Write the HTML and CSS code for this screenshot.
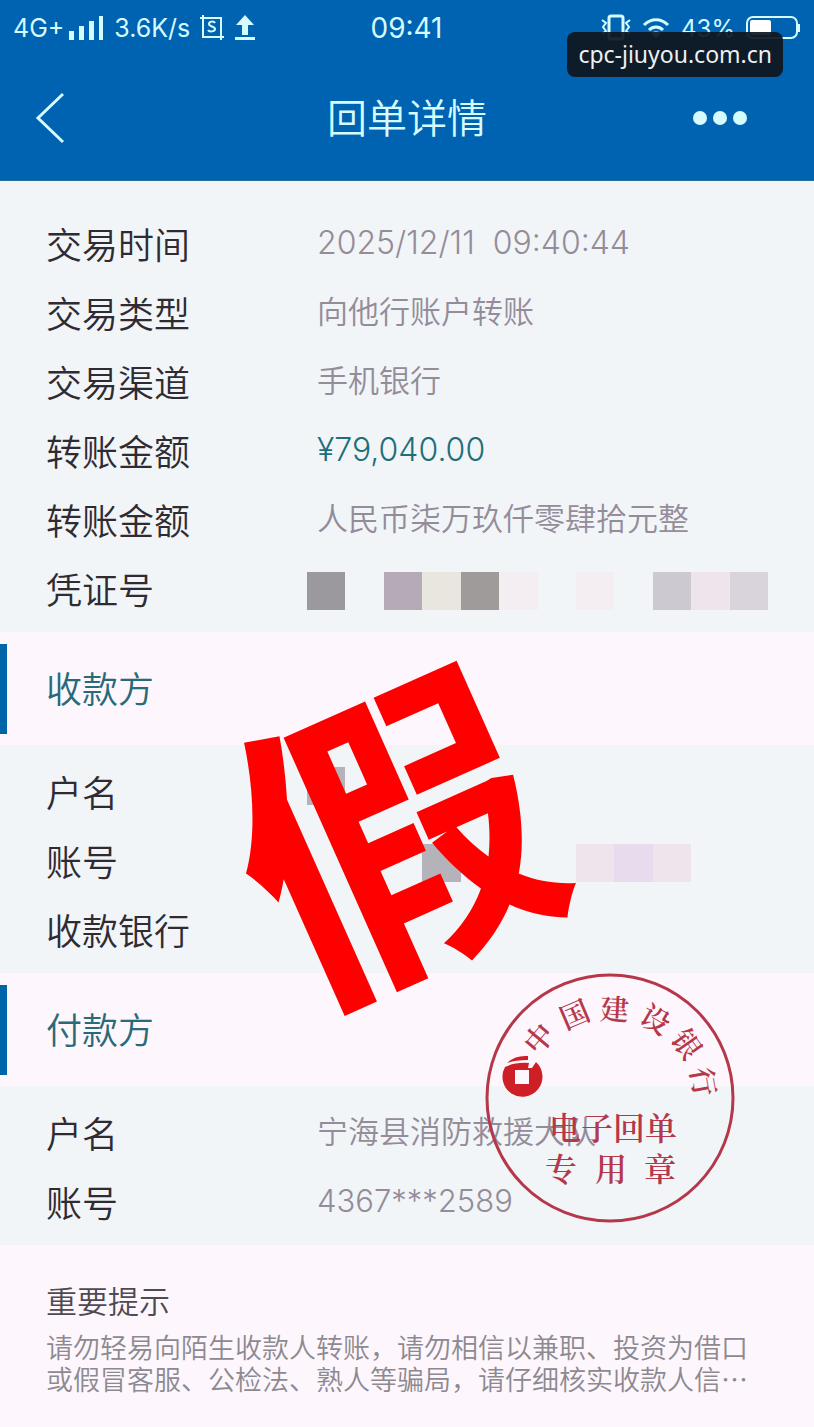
FILE: index.html
```html
<!DOCTYPE html>
<html lang="zh-CN">
<head>
    <meta charset="UTF-8">
    <meta name="viewport" content="width=device-width, initial-scale=1.0">
    <title>回单详情</title>
    <link rel="stylesheet" href="styles.css">
</head>
<body>
    <header class="header">
        <div class="status-bar">
            <div class="status-left">
                <span class="network">4G+</span>
                <svg class="signal" width="36" height="26" viewBox="0 0 36 26" fill="currentColor">
                    <rect x="1" y="16" width="5" height="9"/>
                    <rect x="11" y="11" width="5" height="14"/>
                    <rect x="21" y="6" width="5" height="19"/>
                    <rect x="31" y="1" width="4" height="24"/>
                </svg>
                <span class="speed">3.6K/s</span>
                <svg class="shot" width="24" height="26" viewBox="0 0 24 26" fill="none" stroke="currentColor" stroke-width="2">
                    <path d="M0 3h21v22M3 0v22h21"/>
                    <path d="M15 8c-1-2-6-2-6 1s6 2 6 5-6 3-7 1"/>
                </svg>
                <svg width="22" height="26" viewBox="0 0 22 26" fill="currentColor">
                    <path d="M11 0l9 10h-6v10H8V10H2zM1 22h20v3H1z"/>
                </svg>
            </div>
            <div class="clock">09:41</div>
            <div class="status-right">
                <svg width="30" height="28" viewBox="0 0 30 28" fill="none" stroke="currentColor">
                    <rect x="8" y="2" width="14" height="23" rx="2" stroke-width="3"/>
                    <path d="M1 6l4 3-3 4 3 4-4 3M29 6l-4 3 3 4-3 4 4 3" stroke-width="2"/>
                </svg>
                <svg width="28" height="24" viewBox="0 0 28 24" fill="none" stroke="currentColor" stroke-width="3">
                    <path d="M2 9c7-7 17-7 24 0M7 14c4-4 10-4 14 0"/>
                    <path d="M14 22l-5-5c3-2 7-2 10 0z" fill="currentColor" stroke="none"/>
                </svg>
                <span class="percent">43%</span>
                <svg width="54" height="24" viewBox="0 0 54 24">
                    <rect x="1" y="1" width="50" height="21" rx="6" fill="none" stroke="currentColor" stroke-width="2"/>
                    <rect x="4" y="4" width="21" height="15" rx="2" fill="#fff"/>
                    <path d="M53 8v8" stroke="currentColor" stroke-width="2"/>
                </svg>
            </div>
        </div>
        <nav class="nav-bar">
            <button class="icon-button" type="button" aria-label="返回">
                <svg width="30" height="52" viewBox="0 0 30 52" fill="none" stroke="currentColor" stroke-width="3">
                    <path d="M28 2L3 26l25 24"/>
                </svg>
            </button>
            <h1>回单详情</h1>
            <button class="icon-button more" type="button" aria-label="更多">
                <svg width="56" height="16" viewBox="0 0 56 16" fill="currentColor">
                    <circle cx="8" cy="8" r="7"/>
                    <circle cx="28" cy="8" r="7"/>
                    <circle cx="48" cy="8" r="7"/>
                </svg>
            </button>
        </nav>
        <div class="site-badge">cpc-jiuyou.com.cn</div>
    </header>

    <main>
        <section class="details first">
            <dl>
                <div class="row"><dt>交易时间</dt><dd class="number">2025/12/11&nbsp; 09:40:44</dd></div>
                <div class="row"><dt>交易类型</dt><dd>向他行账户转账</dd></div>
                <div class="row"><dt>交易渠道</dt><dd>手机银行</dd></div>
                <div class="row"><dt>转账金额</dt><dd class="number amount">¥79,040.00</dd></div>
                <div class="row"><dt>转账金额</dt><dd>人民币柒万玖仟零肆拾元整</dd></div>
                <div class="row">
                    <dt>凭证号</dt>
                    <dd class="mosaic">
                        <i class="dark"></i><i></i><i class="mauve"></i><i class="cream"></i><i class="dark warm"></i><i class="pale"></i>
                        <i></i><i class="pale"></i><i></i><i class="silver"></i><i class="pink"></i><i class="lilac"></i>
                    </dd>
                </div>
            </dl>
        </section>

        <h2>收款方</h2>
        <section class="details payee">
            <dl>
                <div class="row">
                    <dt>户名</dt>
                    <dd class="mosaic top">
                        <i class="gray"></i><i></i><i></i><i></i><i></i><i></i><i></i><i></i><i></i><i></i><i></i><i></i>
                    </dd>
                </div>
                <div class="row">
                    <dt>账号</dt>
                    <dd class="mosaic">
                        <i></i><i></i><i></i><i class="gray"></i><i></i><i></i><i></i><i class="pink"></i><i class="violet"></i><i class="pink"></i><i></i><i></i>
                    </dd>
                </div>
                <div class="row"><dt>收款银行</dt><dd></dd></div>
            </dl>
            <div class="fake-mark">假</div>
        </section>

        <h2>付款方</h2>
        <section class="details payer">
            <dl>
                <div class="row"><dt>户名</dt><dd>宁海县消防救援大队</dd></div>
                <div class="row"><dt>账号</dt><dd class="number">4367***2589</dd></div>
            </dl>
            <svg class="seal" width="250" height="250" viewBox="0 0 250 250">
                <circle cx="125" cy="125" r="123" fill="none" stroke="#b5384a" stroke-width="3"/>
                <g class="seal-arc" transform="translate(125 125)">
                    <text y="-82" transform="rotate(-50)">中</text>
                    <text y="-80" transform="rotate(-23)">国</text>
                    <text y="-78" transform="rotate(3)">建</text>
                    <text y="-80" transform="rotate(30)">设</text>
                    <text y="-83" transform="rotate(55)">银</text>
                    <text y="-84" transform="rotate(80)">行</text>
                </g>
                <g fill="#cf1f26">
                    <path d="M22 90Q30 82 43 83v4Q30 87 22 90z"/>
                    <path d="M20 94Q30 89 44 90l-1 5h4l4-6A20 20 0 1 1 20 94zM30 97v14h14V97z" fill-rule="evenodd"/>
                </g>
                <text class="seal-text" x="128" y="167">电子回单</text>
                <text class="seal-text" x="76" y="208">专</text>
                <text class="seal-text" x="126" y="208">用</text>
                <text class="seal-text" x="175" y="208">章</text>
            </svg>
        </section>
    </main>

    <footer class="notice">
        <h3>重要提示</h3>
        <p>请勿轻易向陌生收款人转账，请勿相信以兼职、投资为借口或假冒客服、公检法、熟人等骗局，请仔细核实收款人信…</p>
    </footer>
</body>
</html>
```
FILE: styles.css
```css
* {
    box-sizing: border-box;
}
body {
    margin: 0;
    background-color: #fdf6fd;
    color: #2f2b33;
    font-family: "Noto Sans CJK SC", sans-serif;
    font-weight: 350;
}
h1, h2, h3, p, dl, dd {
    margin: 0;
    font-weight: 350;
}

/* 顶部 */
.header {
    position: relative;
    background-color: #0063b1;
    border-bottom: 1px solid #2a6f97;
    color: #d5fbff;
}
.status-bar {
    display: grid;
    grid-template-columns: 1fr auto 1fr;
    align-items: center;
    height: 56px;
    padding: 0 14px 0 13px;
    font-family: Inter, "Noto Sans CJK SC", sans-serif;
    font-size: 25px;
    font-weight: 400;
}
.status-left,
.status-right {
    display: flex;
    align-items: center;
}
.status-left {
    gap: 10px;
}
.network {
    margin-right: -6px;
}
.status-right {
    justify-content: flex-end;
    gap: 11px;
}
.percent {
    font-size: 24px;
}
.clock {
    font-size: 28px;
}
.nav-bar {
    display: grid;
    grid-template-columns: 1fr auto 1fr;
    align-items: center;
    height: 124px;
    padding: 0 66px 0 35px;
}
.nav-bar h1 {
    padding: 0 0 4px 31px;
    font-size: 40px;
    line-height: 60px;
}
.icon-button {
    display: flex;
    justify-self: start;
    padding: 0;
    border: none;
    background: none;
    color: inherit;
    cursor: pointer;
}
.icon-button.more {
    justify-self: end;
}
.site-badge {
    position: absolute;
    top: 32px;
    right: 31px;
    padding: 0 11px;
    border-radius: 8px;
    background-color: rgba(15, 22, 30, 0.92);
    color: #f0f0f0;
    font-family: "Noto Sans", sans-serif;
    font-size: 23px;
    font-weight: 400;
    line-height: 45px;
}

/* 明细 */
.details {
    position: relative;
    padding: 14px 46px 7px;
    background-color: #f1f5f8;
}
.details.first {
    padding-top: 30px;
}
.row {
    display: grid;
    grid-template-columns: 271px 1fr;
    align-items: center;
    height: 69px;
}
.row dt {
    padding-bottom: 6px;
    font-size: 36px;
    line-height: 54px;
}
.row dd {
    padding-bottom: 9px;
    color: #948c98;
    font-size: 31px;
    line-height: 46px;
    white-space: nowrap;
}
.row .number {
    padding-bottom: 5px;
    font-family: Inter, "Noto Sans CJK SC", sans-serif;
}
.first .number {
    font-size: 32px;
}
.row .amount {
    color: #1f6f78;
}
.row .mosaic {
    display: flex;
    height: 38px;
    margin-left: -10px;
    padding: 0;
}
.row .mosaic.top {
    align-self: start;
    margin-top: 8px;
}
.mosaic i {
    flex: 1;
}
.mosaic .dark {
    background-color: #9b989e;
}
.mosaic .warm {
    background-color: #9f9b9b;
}
.mosaic .gray {
    background-color: #b5b3ba;
}
.mosaic .mauve {
    background-color: #b4abb7;
}
.mosaic .cream {
    background-color: #e9e5df;
}
.mosaic .silver {
    background-color: #cdc9d0;
}
.mosaic .pink {
    background-color: #eee5ec;
}
.mosaic .lilac {
    background-color: #d9d3dc;
}
.mosaic .violet {
    background-color: #e7dcee;
}
.mosaic .pale {
    background-color: #f4eef2;
}
h2 {
    margin: 12px 0 11px;
    padding: 0 0 4px 39px;
    border-left: 7px solid #0065a8;
    color: #286b78;
    font-size: 36px;
    line-height: 86px;
}

/* 印章和标记 */
.fake-mark {
    position: absolute;
    top: -80px;
    left: 50%;
    width: 310px;
    margin-left: -177px;
    color: #ff0000;
    font-size: 310px;
    font-weight: 700;
    line-height: 310px;
    transform: rotate(-24deg);
}
.seal {
    position: absolute;
    top: -113px;
    right: 79px;
}
.seal text {
    fill: #b5384a;
    font-family: "Noto Serif CJK SC", "Noto Sans CJK SC", serif;
    font-weight: 600;
    text-anchor: middle;
}
.seal-arc text {
    font-size: 29px;
}
.seal .seal-text {
    font-size: 32px;
}

/* 底部提示 */
.notice {
    padding: 31px 46px 31px;
}
.notice h3 {
    color: #4d4a50;
    font-size: 31px;
    line-height: 48px;
}
.notice p {
    padding-top: 7px;
    color: #8d8990;
    font-size: 27px;
    line-height: 32px;
}
```
